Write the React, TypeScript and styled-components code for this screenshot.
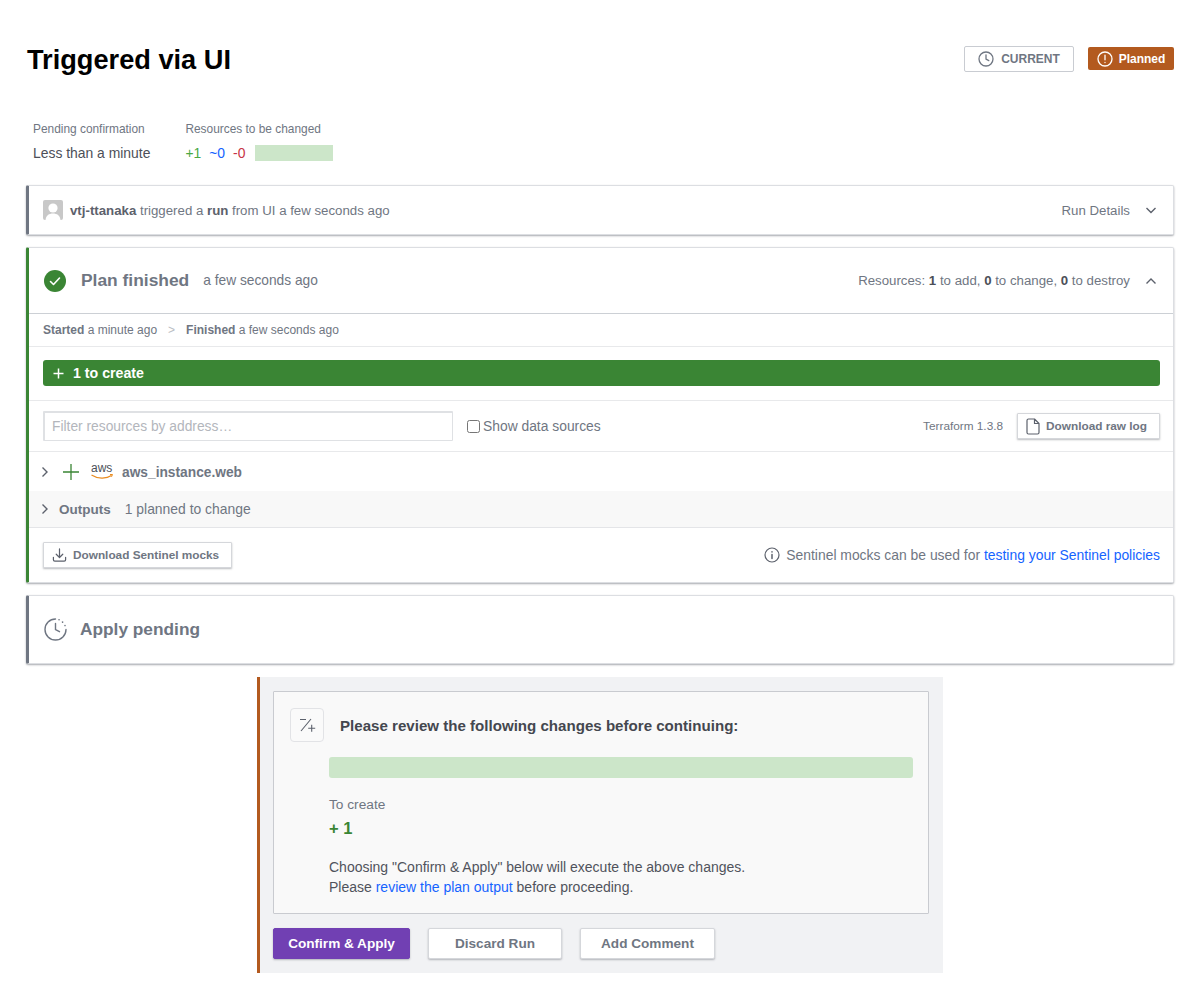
import React from "react";
import styled, { createGlobalStyle } from "styled-components";

const GlobalStyle = createGlobalStyle`
  html, body {
    margin: 0;
    padding: 0;
    background: #fff;
    font-family: "Liberation Sans", Arial, sans-serif;
    color: #6f7682;
  }
  * { box-sizing: border-box; }
`;

const colors = {
  gray: "#6f7682",
  dark: "#3b3d45",
  green: "#3a8534",
  blue: "#1563ff",
  orange: "#b35a1f",
  purple: "#7140b3",
  line: "#dcdee2",
};

const Page = styled.div`
  width: 1200px;
  padding: 45px 26px 0;
`;

const Header = styled.header`
  display: flex;
  align-items: center;
  justify-content: space-between;
  height: 27px;
`;

const Title = styled.h1`
  margin: 2px 0 0 1px;
  font-size: 27.2px;
  line-height: 30px;
  font-weight: 700;
  color: #000;
`;

const Badges = styled.div`
  display: flex;
  align-items: center;
  gap: 14px;
`;

const CurrentBadge = styled.div`
  width: 110px;
  height: 26px;
  display: flex;
  align-items: center;
  justify-content: center;
  gap: 7px;
  border: 1px solid #c9ccd2;
  border-radius: 2px;
  font-size: 12px;
  font-weight: 700;
  color: ${colors.gray};
`;

const PlannedBadge = styled.div`
  width: 86px;
  height: 23px;
  display: flex;
  align-items: center;
  justify-content: center;
  gap: 6px;
  border-radius: 2px;
  background: ${colors.orange};
  color: #fff;
  font-size: 12px;
  font-weight: 700;
`;

const Meta = styled.section`
  display: flex;
  gap: 35px;
  margin: 50px 0 24px 7px;
`;

const MetaCol = styled.div`
  display: flex;
  flex-direction: column;
  gap: 7px;
`;

const MetaLabel = styled.div`
  font-size: 11.9px;
  line-height: 15px;
  color: ${colors.gray};
`;

const MetaValue = styled.div`
  display: flex;
  align-items: center;
  height: 17px;
  font-size: 13.9px;
  color: #4c4f58;
`;

const Delta = styled.span<{ $color: string }>`
  color: ${(p) => p.$color};
  margin-right: 8px;
`;

const MetaBar = styled.span`
  width: 78px;
  height: 16px;
  margin-left: 2px;
  background: #cce6c9;
`;

const Card = styled.section<{ $accent: string }>`
  background: #fff;
  border: 1px solid ${colors.line};
  border-left: 3px solid ${(p) => p.$accent};
  border-radius: 2px;
  box-shadow: 0 1px 2px rgba(60, 65, 75, 0.45);
  margin-bottom: 12px;
`;

const RunRow = styled.div`
  height: 48px;
  display: flex;
  align-items: center;
  padding: 0 16px 0 14px;
  font-size: 13.25px;
  color: ${colors.gray};
  b { color: #5c616c; }
`;

const Avatar = styled.span`
  width: 20px;
  height: 20px;
  margin-right: 7px;
  border-radius: 2px;
  background: #c8c8c8;
  overflow: hidden;
  svg { display: block; }
`;

const Spacer = styled.span`
  flex: 1;
`;

const RowText = styled.span`
  font-size: 13.25px;
  color: ${colors.gray};
  b { color: #4c4f58; }
`;

const Chevron = styled.svg`
  margin-left: 15px;
  flex: none;
`;

const PlanHeader = styled.div`
  height: 66px;
  display: flex;
  align-items: center;
  padding: 0 16px 0 15px;
  border-bottom: 1px solid #ccd0d5;
`;

const StatusTitle = styled.h2`
  margin: 0 14px 0 15px;
  font-size: 17.4px;
  font-weight: 700;
  color: ${colors.gray};
`;

const StatusTime = styled.span`
  font-size: 13.75px;
  color: ${colors.gray};
`;

const Timeline = styled.div`
  height: 33px;
  display: flex;
  align-items: center;
  padding: 0 14px;
  font-size: 12px;
  color: ${colors.gray};
  border-bottom: 1px solid #e8e9eb;
  b { font-weight: 700; }
`;

const TimelineSep = styled.span`
  margin: 0 11px;
  color: #b9bcc3;
`;

const CreateSection = styled.div`
  padding: 13px 13px 14px 14px;
  border-bottom: 1px solid #e8e9eb;
`;

const CreateBar = styled.div`
  height: 26px;
  display: flex;
  align-items: center;
  gap: 9px;
  padding-left: 10px;
  border-radius: 3px;
  background: ${colors.green};
  color: #fff;
  font-size: 14.2px;
  font-weight: 700;
`;

const FilterRow = styled.div`
  height: 51px;
  display: flex;
  align-items: center;
  padding: 0 13px 0 14px;
  border-bottom: 1px solid #e8e9eb;
`;

const FilterInput = styled.input`
  width: 410px;
  height: 30px;
  padding: 0 7px;
  border: 1px solid #dfe1e4;
  border-top-width: 2px;
  border-left-width: 2px;
  border-radius: 1px;
  font: 13.8px "Liberation Sans", Arial, sans-serif;
  outline: none;
  &::placeholder { color: #b3b6bc; opacity: 1; }
`;

const CheckLabel = styled.label`
  display: flex;
  align-items: center;
  gap: 3px;
  margin-left: 14px;
  font-size: 13.85px;
  color: ${colors.gray};
  input { width: 13px; height: 13px; margin: 0; }
`;

const TfVersion = styled.span`
  margin-right: 14px;
  font-size: 11.8px;
  color: ${colors.gray};
`;

const SmallButton = styled.button`
  height: 26px;
  display: flex;
  align-items: center;
  gap: 6px;
  padding: 0 12px 0 8px;
  background: #fff;
  border: 1px solid #d5d7db;
  border-radius: 1px;
  box-shadow: 0 1px 2px rgba(60, 65, 75, 0.35);
  font: 700 11.8px "Liberation Sans", Arial, sans-serif;
  color: ${colors.gray};
`;

const ResourceRow = styled.div`
  height: 39px;
  display: flex;
  align-items: center;
  padding: 1px 0 0 11px;
  font-size: 13.75px;
  font-weight: 700;
  color: ${colors.gray};
`;

const OutputsRow = styled.div`
  height: 37px;
  display: flex;
  align-items: center;
  padding-left: 11px;
  background: #f8f8f8;
  border-bottom: 1px solid #e4e5e8;
  font-size: 13.9px;
  color: ${colors.gray};
  b { margin: 0 14px 0 9px; font-size: 13.5px; }
`;

const AwsLogo = styled.svg`
  margin: 0 4px 0 12px;
`;

const PlusIcon = styled.svg`
  margin-left: 13px;
`;

const FooterRow = styled.div`
  height: 54px;
  display: flex;
  align-items: center;
  padding: 0 13px 0 14px;
`;

const Note = styled.span`
  display: flex;
  align-items: center;
  gap: 6px;
  font-size: 13.9px;
  color: ${colors.gray};
`;

const Link = styled.a`
  color: ${colors.blue};
  text-decoration: none;
`;

const PendingRow = styled.div`
  height: 67px;
  display: flex;
  align-items: center;
  gap: 13px;
  padding: 0 15px;
  font-size: 17.3px;
  font-weight: 700;
  color: ${colors.gray};
`;

const ReviewPanel = styled.section`
  width: 686px;
  height: 296px;
  margin: 13px 0 0 231px;
  padding: 14px 14px 14px 13px;
  background: #f1f2f4;
  border-left: 3px solid ${colors.orange};
`;

const ReviewBox = styled.div`
  height: 223px;
  padding: 16px 15px 0 16px;
  background: #f9f9f9;
  border: 1px solid #c9cbd0;
  border-radius: 1px;
`;

const ReviewHead = styled.div`
  display: flex;
  align-items: center;
  gap: 16px;
`;

const IconTile = styled.span`
  width: 34px;
  height: 34px;
  display: flex;
  align-items: center;
  justify-content: center;
  background: #fafafa;
  border: 1px solid #e2e3e6;
  border-radius: 4px;
`;

const ReviewTitle = styled.h3`
  margin: 0;
  font-size: 15.1px;
  font-weight: 700;
  color: #44474f;
`;

const ReviewBody = styled.div`
  margin-left: 39px;
`;

const ChangeBar = styled.div`
  height: 21px;
  margin-top: 15px;
  background: #cce6c9;
  border-radius: 3px;
`;

const CreateLabel = styled.div`
  margin-top: 19px;
  font-size: 13.7px;
  line-height: 15px;
  color: ${colors.gray};
`;

const CreateCount = styled.div`
  margin-top: 6px;
  font-size: 16.5px;
  line-height: 20px;
  font-weight: 700;
  color: ${colors.green};
`;

const ReviewText = styled.p`
  margin: 19px 0 0;
  font-size: 14px;
  line-height: 20px;
  color: #50535c;
`;

const Actions = styled.div`
  display: flex;
  gap: 18px;
  margin-top: 14px;
`;

const ActionButton = styled.button<{ $primary?: boolean; $width: number }>`
  width: ${(p) => p.$width}px;
  height: 31px;
  padding: 0;
  background: ${(p) => (p.$primary ? colors.purple : "#fff")};
  border: 1px solid ${(p) => (p.$primary ? colors.purple : "#d5d7db")};
  border-radius: 2px;
  box-shadow: 0 1px 2px rgba(60, 65, 75, 0.35);
  color: ${(p) => (p.$primary ? "#fff" : colors.gray)};
  font: 700 13.6px "Liberation Sans", Arial, sans-serif;
`;

function ChevronIcon({ up }: { up?: boolean }) {
  return (
    <Chevron width="12" height="12" viewBox="0 0 12 12" fill="none" stroke="#5c616c" strokeWidth="1.4">
      <path d={up ? "M1.5 8.5 6 4l4.5 4.5" : "M1.5 4 6 8.5 10.5 4"} />
    </Chevron>
  );
}

function RightChevron() {
  return (
    <svg width="10" height="12" viewBox="0 0 10 12" fill="none" stroke="#5c616c" strokeWidth="1.4">
      <path d="M2.5 1.5 7 6l-4.5 4.5" />
    </svg>
  );
}

function ClockIcon({ size, color }: { size: number; color: string }) {
  return (
    <svg width={size} height={size} viewBox="0 0 16 16" fill="none" stroke={color} strokeWidth="1.3" strokeLinecap="round">
      <circle cx="8" cy="8" r="7" />
      <path d="M8 3.8V8l2.8 1.6" />
    </svg>
  );
}

export default function App() {
  return (
    <Page>
      <GlobalStyle />
      <Header>
        <Title>Triggered via UI</Title>
        <Badges>
          <CurrentBadge>
            <ClockIcon size={16} color={colors.gray} />
            CURRENT
          </CurrentBadge>
          <PlannedBadge>
            <svg width="16" height="16" viewBox="0 0 16 16" fill="none" stroke="#fff" strokeWidth="1.3" strokeLinecap="round">
              <circle cx="8" cy="8" r="7" />
              <path d="M8 4.2v4.6M8 11.4v.2" />
            </svg>
            Planned
          </PlannedBadge>
        </Badges>
      </Header>

      <Meta>
        <MetaCol>
          <MetaLabel>Pending confirmation</MetaLabel>
          <MetaValue>Less than a minute</MetaValue>
        </MetaCol>
        <MetaCol>
          <MetaLabel>Resources to be changed</MetaLabel>
          <MetaValue>
            <Delta $color="#4aa843">+1</Delta>
            <Delta $color={colors.blue}>~0</Delta>
            <Delta $color="#c73445">-0</Delta>
            <MetaBar />
          </MetaValue>
        </MetaCol>
      </Meta>

      <Card $accent={colors.gray}>
        <RunRow>
          <Avatar>
            <svg width="20" height="20" viewBox="0 0 20 20" fill="#fff">
              <circle cx="10" cy="8" r="4.6" />
              <path d="M2.5 20c.5-4.5 3.5-6.5 7.5-6.5s7 2 7.500 6.500z" />
            </svg>
          </Avatar>
          <span>
            <b>vtj-ttanaka</b> triggered a <b>run</b> from UI a few seconds ago
          </span>
          <Spacer />
          <RowText>Run Details</RowText>
          <ChevronIcon />
        </RunRow>
      </Card>

      <Card $accent={colors.green}>
        <PlanHeader>
          <svg width="22" height="22" viewBox="0 0 22 22">
            <circle cx="11" cy="11" r="11" fill={colors.green} />
            <path d="M6.500 11.500l3 3 6-6.500" fill="none" stroke="#fff" strokeWidth="1.6" strokeLinecap="round" strokeLinejoin="round" />
          </svg>
          <StatusTitle>Plan finished</StatusTitle>
          <StatusTime>a few seconds ago</StatusTime>
          <Spacer />
          <RowText>
            Resources: <b>1</b> to add, <b>0</b> to change, <b>0</b> to destroy
          </RowText>
          <ChevronIcon up />
        </PlanHeader>
        <Timeline>
          <span><b>Started</b> a minute ago</span>
          <TimelineSep>&gt;</TimelineSep>
          <span><b>Finished</b> a few seconds ago</span>
        </Timeline>
        <CreateSection>
          <CreateBar>
            <svg width="11" height="11" viewBox="0 0 11 11" stroke="#fff" strokeWidth="1.5">
              <path d="M5.500 .5v10M.5 5.500h10" />
            </svg>
            1 to create
          </CreateBar>
        </CreateSection>
        <FilterRow>
          <FilterInput placeholder="Filter resources by address…" readOnly />
          <CheckLabel>
            <input type="checkbox" readOnly />
            Show data sources
          </CheckLabel>
          <Spacer />
          <TfVersion>Terraform 1.3.8</TfVersion>
          <SmallButton>
            <svg width="14" height="17" viewBox="0 0 14 17" fill="none" stroke="#5c616c" strokeWidth="1.200" strokeLinejoin="round">
              <path d="M2.500 1h6L13 5.500V14.500a1.500 1.500 0 0 1-1.500 1.500h-9A1.500 1.500 0 0 1 1 14.500v-12A1.500 1.500 0 0 1 2.500 1zM8.500 1v4.500H13" />
            </svg>
            Download raw log
          </SmallButton>
        </FilterRow>
        <ResourceRow>
          <RightChevron />
          <PlusIcon width="16" height="16" viewBox="0 0 16 16" stroke={colors.green} strokeWidth="1.3">
            <path d="M8 0v16M0 8h16" />
          </PlusIcon>
          <AwsLogo width="27" height="22" viewBox="0 -3 27 22" fill="none">
            <text x="0" y="8" fontFamily="Liberation Sans, sans-serif" fontSize="12" fontWeight="400" fill="#4c4f58">aws</text>
            <path d="M.5 11c6 4 15 4 20 .5" stroke="#e98b1f" strokeWidth="1.200" />
            <path d="M19 10.500l2.500 0-1 2.300" stroke="#e98b1f" strokeWidth="1" />
          </AwsLogo>
          aws_instance.web
        </ResourceRow>
        <OutputsRow>
          <RightChevron />
          <b>Outputs</b>
          1 planned to change
        </OutputsRow>
        <FooterRow>
          <SmallButton>
            <svg width="15" height="16" viewBox="0 0 16 16" fill="none" stroke="#5c616c" strokeWidth="1.300" strokeLinecap="round" strokeLinejoin="round">
              <path d="M8 1.500v9M4.500 7.200 8 10.700l3.500-3.500M1.500 10.500v2.500a1.500 1.500 0 0 0 1.500 1.500h10a1.500 1.500 0 0 0 1.500-1.500v-2.500" />
            </svg>
            Download Sentinel mocks
          </SmallButton>
          <Spacer />
          <Note>
            <svg width="16" height="16" viewBox="0 0 16 16" fill="none" stroke="#5c616c" strokeWidth="1.200" strokeLinecap="round">
              <circle cx="8" cy="8" r="7" />
              <path d="M8 7.500v4M8 4.700v.2" strokeWidth="1.500" />
            </svg>
            <span>
              Sentinel mocks can be used for <Link href="#">testing your Sentinel policies</Link>
            </span>
          </Note>
        </FooterRow>
      </Card>

      <Card $accent={colors.gray}>
        <PendingRow>
          <svg width="23" height="23" viewBox="0 0 23 23" fill="none" stroke={colors.gray} strokeWidth="1.400" strokeLinecap="round">
            <path d="M11.500 1A10.500 10.500 0 1 0 22 11.500" />
            <path d="M15 1.700l.1 0M18.500 4l.1.100M21 7.500l0 .1" strokeWidth="1.600" />
            <path d="M11.500 5.500v6l4 2.200" />
          </svg>
          Apply pending
        </PendingRow>
      </Card>

      <ReviewPanel>
        <ReviewBox>
          <ReviewHead>
            <IconTile>
              <svg width="18" height="16" viewBox="0 0 18 16" fill="none" stroke="#5c616c" strokeWidth="1.100">
                <path d="M2 2.500h6M13 2 3 14M10.200 11.300h7M13.700 7.800v7" />
              </svg>
            </IconTile>
            <ReviewTitle>Please review the following changes before continuing:</ReviewTitle>
          </ReviewHead>
          <ReviewBody>
            <ChangeBar />
            <CreateLabel>To create</CreateLabel>
            <CreateCount>+ 1</CreateCount>
            <ReviewText>
              Choosing "Confirm &amp; Apply" below will execute the above changes.
              <br />
              Please <Link href="#">review the plan output</Link> before proceeding.
            </ReviewText>
          </ReviewBody>
        </ReviewBox>
        <Actions>
          <ActionButton $primary $width={137}>Confirm &amp; Apply</ActionButton>
          <ActionButton $width={134}>Discard Run</ActionButton>
          <ActionButton $width={135}>Add Comment</ActionButton>
        </Actions>
      </ReviewPanel>
    </Page>
  );
}
